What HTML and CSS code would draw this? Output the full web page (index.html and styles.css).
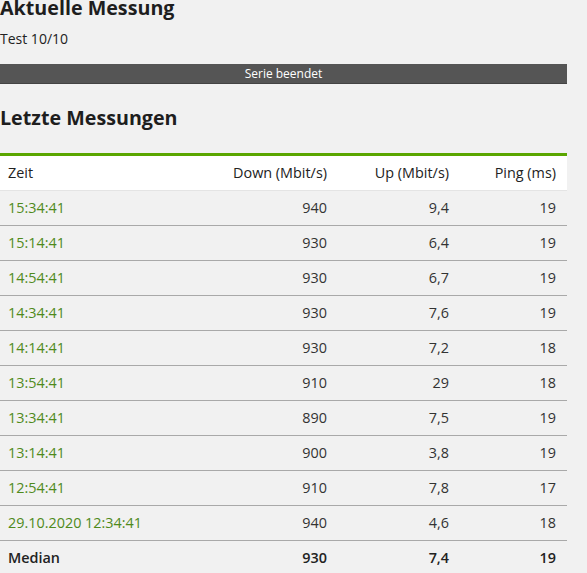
FILE: index.html
```html
<!DOCTYPE html>
<html lang="de">
<head>
<meta charset="utf-8">
<title>Messungen</title>
<link rel="stylesheet" href="styles.css">
</head>
<body>
<main class="page">
  <h1 class="title">Aktuelle Messung</h1>
  <p class="status">Test 10/10</p>
  <div class="progress">Serie beendet</div>
  <h2 class="title title-second">Letzte Messungen</h2>
  <table class="results">
    <colgroup>
      <col class="c-time"><col class="c-down"><col class="c-up"><col class="c-ping">
    </colgroup>
    <thead>
      <tr><th class="left">Zeit</th><th>Down (Mbit/s)</th><th>Up (Mbit/s)</th><th>Ping (ms)</th></tr>
    </thead>
    <tbody>
      <tr><td class="time">15:34:41</td><td>940</td><td>9,4</td><td>19</td></tr>
      <tr><td class="time">15:14:41</td><td>930</td><td>6,4</td><td>19</td></tr>
      <tr><td class="time">14:54:41</td><td>930</td><td>6,7</td><td>19</td></tr>
      <tr><td class="time">14:34:41</td><td>930</td><td>7,6</td><td>19</td></tr>
      <tr><td class="time">14:14:41</td><td>930</td><td>7,2</td><td>18</td></tr>
      <tr><td class="time">13:54:41</td><td>910</td><td>29</td><td>18</td></tr>
      <tr><td class="time">13:34:41</td><td>890</td><td>7,5</td><td>19</td></tr>
      <tr><td class="time">13:14:41</td><td>900</td><td>3,8</td><td>19</td></tr>
      <tr><td class="time">12:54:41</td><td>910</td><td>7,8</td><td>17</td></tr>
      <tr><td class="time">29.10.2020 12:34:41</td><td>940</td><td>4,6</td><td>18</td></tr>
      <tr class="median"><td class="left">Median</td><td>930</td><td>7,4</td><td>19</td></tr>
    </tbody>
  </table>
</main>
</body>
</html>
```

FILE: styles.css
```css
html, body {
  margin: 0;
  padding: 0;
  background: #f1f1f1;
}

body {
  font-family: "Open Sans", "Liberation Sans", sans-serif;
  color: #222;
}

.page {
  width: 567px;
}

.title {
  font-size: 19.7px;
  font-weight: 700;
  line-height: 27px;
  margin: -6px 0 0 0;
  color: #1e1e1e;
}

.title-second {
  margin-top: 20px;
}

.status {
  font-size: 14px;
  line-height: 19px;
  margin: 8px 0 0 0;
  color: #222;
}

.progress {
  margin-top: 16px;
  height: 19px;
  line-height: 19px;
  background: #555555;
  border-bottom: 1px solid #444444;
  color: #ffffff;
  font-size: 12px;
  text-align: center;
}

.results {
  margin-top: 22px;
  width: 567px;
  border-collapse: collapse;
  table-layout: fixed;
  border-top: 3px solid #5aa600;
  font-size: 14.4px;
  line-height: 19px;
}

.c-time { width: 200px; }
.c-down { width: 138px; }
.c-up { width: 122px; }
.c-ping { width: 107px; }

.results th {
  background: #ffffff;
  font-weight: 400;
  color: #222;
  height: 32px;
  padding: 0 11px 2px 8px;
  text-align: right;
  border-bottom: 1px solid #e4e4e4;
  white-space: nowrap;
}

.results td {
  height: 32px;
  padding: 0 11px 2px 8px;
  text-align: right;
  color: #333;
  border-bottom: 1px solid #a9a9a9;
  white-space: nowrap;
}

.results th.left,
.results td.left,
.results td.time {
  text-align: left;
}

.results td.time {
  color: #4f8a1b;
}

.results tr.median td {
  font-weight: 650;
  color: #222;
  border-bottom: none;
}
```
